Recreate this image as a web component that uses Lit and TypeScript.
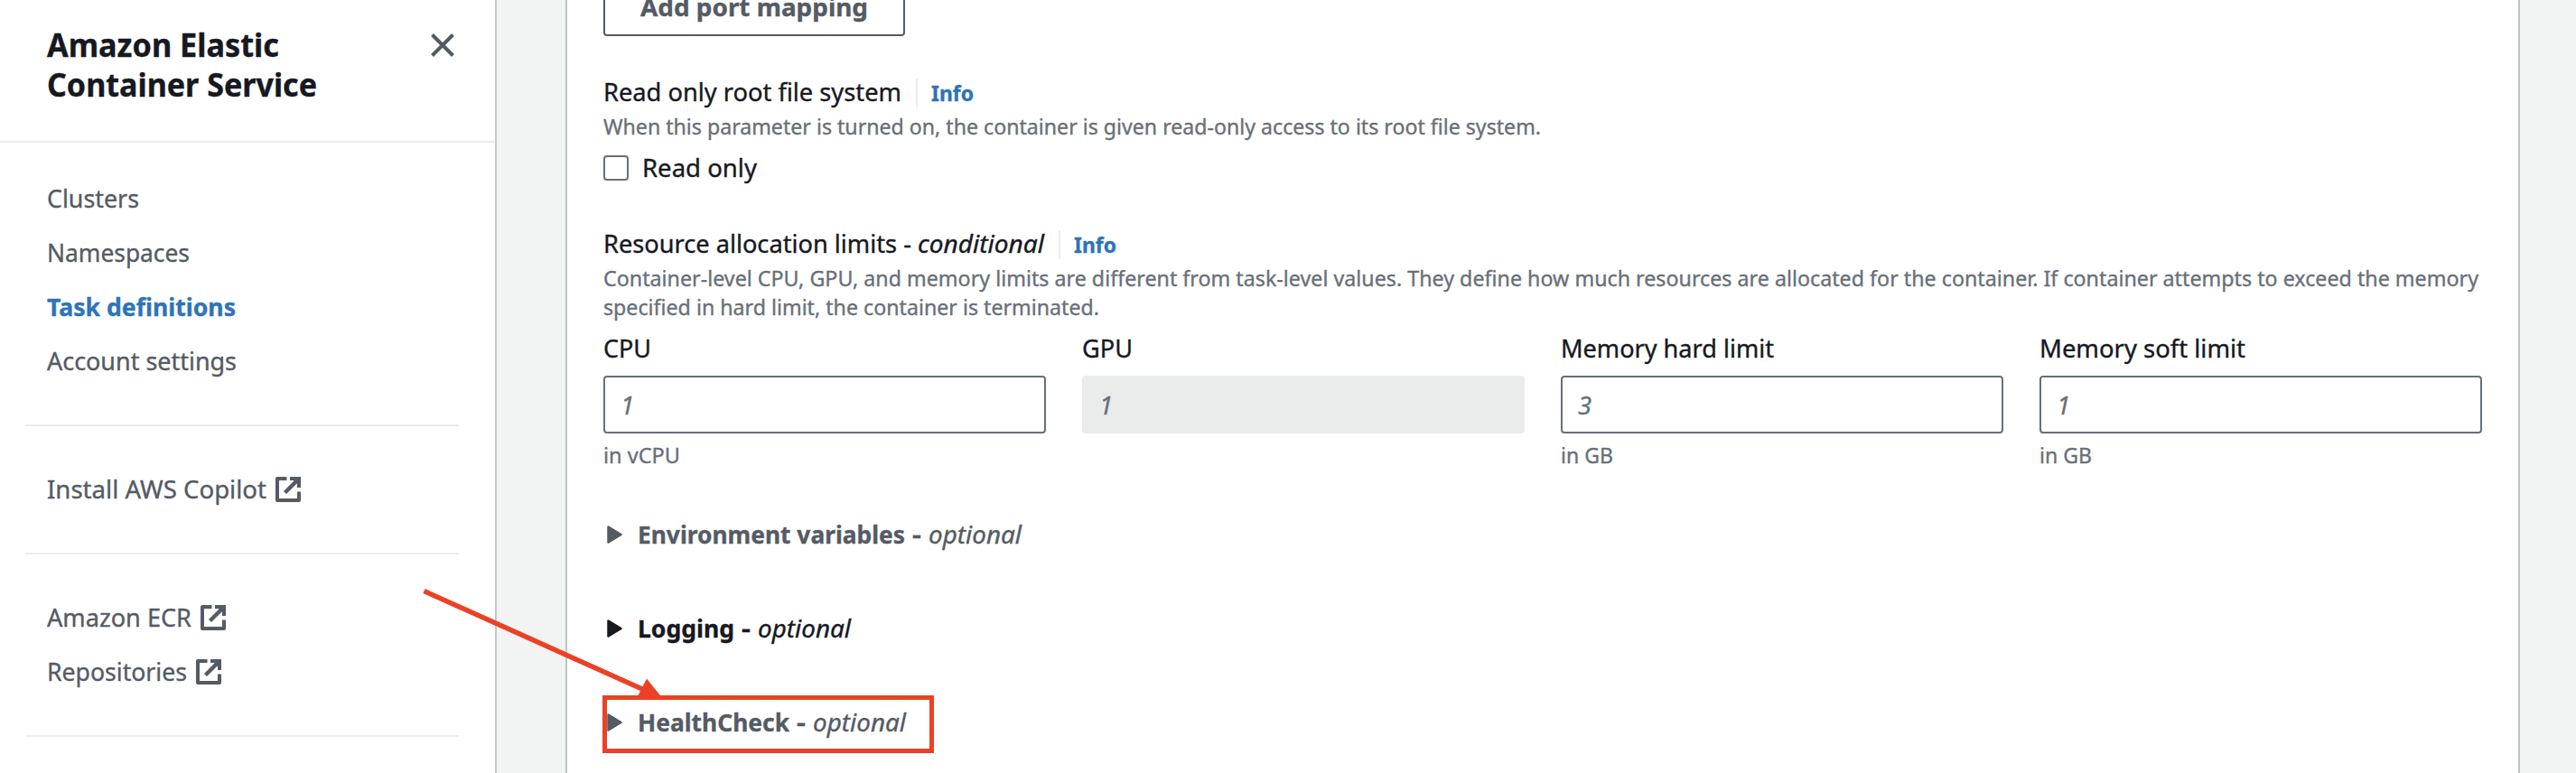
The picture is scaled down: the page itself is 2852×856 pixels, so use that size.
import { LitElement, html, css, svg, nothing } from "lit";
import { customElement, property, state } from "lit/decorators.js";
import { styleMap } from "lit/directives/style-map.js";

/** One line of text condensed or expanded to an exact advance width. */
@customElement("fit-text")
class FitText extends LitElement {
  static styles = css`
    :host { display: inline-block; white-space: pre; }
    .box { display: inline-block; overflow: visible; }
    .ink { display: inline-block; transform-origin: 0 50%; }
  `;
  @property() text = "";
  @property({ type: Number }) width = 0;
  @state() private natural = 0;

  protected updated() {
    const ink = this.renderRoot.querySelector(".ink") as HTMLElement;
    const w = parseFloat(getComputedStyle(ink).width);
    if (w && Math.abs(w - this.natural) > 0.01) this.natural = w;
  }

  render() {
    const scale = this.natural ? this.width / this.natural : 1;
    return html`<span class="box" style=${styleMap({ width: `${this.width}px` })}><span class="ink" style=${styleMap({ transform: `scaleX(${scale})` })}>${this.text}</span></span>`;
  }
}

const fit = (text: string, width: number) => html`<fit-text .text=${text} .width=${width}></fit-text>`;

const externalIcon = svg`
  <path d="M12.5 2H2V26H26V16.5" fill="none" stroke="currentColor" stroke-width="4" stroke-linejoin="round"/>
  <path d="M16 2H26V12" fill="none" stroke="currentColor" stroke-width="4"/>
  <path d="M19 3H25V9Z" fill="currentColor"/>
  <path d="M26 2L10.5 17.5" fill="none" stroke="currentColor" stroke-width="4.4"/>`;

interface NavLink { label: string; width: number; active?: boolean; external?: boolean }
const groups: NavLink[][] = [
  [
    { label: "Clusters", width: 102 },
    { label: "Namespaces", width: 158 },
    { label: "Task definitions", width: 209, active: true },
    { label: "Account settings", width: 210 },
  ],
  [{ label: "Install AWS Copilot", width: 243, external: true }],
  [
    { label: "Amazon ECR", width: 160, external: true },
    { label: "Repositories", width: 155, external: true },
  ],
];

const fields = [
  { label: "CPU", width: 53, value: "1", hint: "in vCPU", hintWidth: 85 },
  { label: "GPU", width: 56, value: "1", disabled: true },
  { label: "Memory hard limit", width: 236, value: "3", hint: "in GB", hintWidth: 58 },
  { label: "Memory soft limit", width: 228, value: "1", hint: "in GB", hintWidth: 58 },
];

const sections = [
  { label: "Environment variables", width: 296, dark: false },
  { label: "Logging", width: 107, dark: true },
  { label: "HealthCheck", width: 168, dark: false },
];

@customElement("app-root")
class AppRoot extends LitElement {
  static styles = css`
    * { box-sizing: border-box; }
    :host {
      display: flex; position: relative; width: 2852px; height: 856px; overflow: hidden;
      background: #f2f3f3; color: #16191f;
      font: 27.5px/32px "Noto Sans", "Open Sans", sans-serif;
      -webkit-text-stroke: 0.35px currentColor;
    }
    .side { width: 550px; flex: none; background: #fff; border-right: 2px solid #c3c8c8; color: #545b64; }
    .head {
      display: flex; justify-content: space-between; height: 158px;
      padding: 27px 45px 0 52px; border-bottom: 2px solid #eaeded;
    }
    h2 { margin: 0; font-size: 35.3px; line-height: 44px; font-weight: 700; color: #16191f; display: flex; flex-direction: column; }
    .close { width: 26px; height: 26px; margin-top: 10px; }
    .group { padding: 39px 40px 41px 24px; margin-left: 28px; border-bottom: 2px solid #eaeded; width: 480px; }
    .group:first-of-type { padding-top: 31px; }
    .link { display: flex; align-items: center; gap: 10px; height: 60px; line-height: 62px; }
    .link fit-text { margin-top: 2px; }
    .link svg { width: 28px; height: 28px; margin-top: 2px; }
    .active { color: #2e73b8; font-weight: 700; }
    .panel {
      width: 2164px; margin-left: 76px; flex: none; background: #fff; padding: 0 40px;
      border: solid #bcc4c7; border-width: 0 2px; display: flex; flex-direction: column;
    }
    .button {
      width: 334px; height: 64px; margin-top: -24px; flex: none; border: 2px solid #545b64; border-radius: 4px;
      color: #545b64; font-weight: 700; line-height: 60px; padding-left: 39px;
    }
    .title { display: flex; height: 39px; margin-top: 45px; line-height: 34px; }
    .title.second { margin-top: 52px; }
    .sep { width: 2px; height: 32px; background: #eaeded; margin: 2px 15px 0 16px; }
    .info { color: #2e73b8; font-size: 23.6px; font-weight: 700; line-height: 36px; }
    .desc { font-size: 23.6px; color: #687078; display: flex; flex-direction: column; }
    .check { display: flex; gap: 15px; height: 32px; margin-top: 13px; line-height: 34px; }
    .box { width: 28px; height: 28px; margin-top: 3px; border: 2px solid #687078; border-radius: 4px; }
    .fields { display: grid; grid-template-columns: repeat(4, 490px); gap: 40px; margin-top: 13px; height: 151px; flex: none; }
    .label { height: 32px; line-height: 34px; }
    .input {
      height: 64px; margin-top: 15px; border: 2px solid #687078; border-radius: 4px; padding-left: 17px;
      line-height: 62px; font-style: italic; color: #687078;
    }
    .disabled { background: #eaeceb; border-color: #eaeceb; }
    .hint { margin-top: 8px; font-size: 23.6px; color: #687078; }
    .sections { display: flex; flex-direction: column; gap: 72px; margin-top: 55px; }
    .expander { display: flex; height: 32px; color: #545b64; font-weight: 700; padding-left: 4px; line-height: 34px; }
    .expander svg { width: 17px; height: 20px; margin: 7px 17px 0 0; }
    .dark { color: #16191f; }
    i { font-weight: 400; }
    .mark { position: absolute; inset: 0; width: 2852px; height: 856px; }
  `;

  render() {
    return html`
      <nav class="side">
        <div class="head">
          <h2>${fit("Amazon Elastic", 257)}${fit("Container Service", 299)}</h2>
          <svg class="close" viewBox="0 0 26 26"><path d="M1.5 1.5L24.5 24.5M24.5 1.5L1.5 24.5" stroke="#545b64" stroke-width="4"/></svg>
        </div>
        ${groups.map((g) => html`<section class="group">
          ${g.map((l) => html`<div class="link ${l.active ? "active" : ""}">
            ${fit(l.label, l.width)}
            ${l.external ? html`<svg viewBox="0 0 28 28">${externalIcon}</svg>` : nothing}
          </div>`)}
        </section>`)}
      </nav>
      <main class="panel">
        <div class="button">${fit("Add port mapping", 252)}</div>
        <div class="title">${fit("Read only root file system", 330)}<span class="sep"></span><span class="info">${fit("Info", 47)}</span></div>
        <div class="desc">${fit("When this parameter is turned on, the container is given read-only access to its root file system.", 1038)}</div>
        <div class="check"><span class="box"></span>${fit("Read only", 127)}</div>
        <div class="title second">${fit("Resource allocation limits - ", 348)}<i>${fit("conditional", 140)}</i><span class="sep"></span><span class="info">${fit("Info", 47)}</span></div>
        <div class="desc">
          ${fit("Container-level CPU, GPU, and memory limits are different from task-level values. They define how much resources are allocated for the container. If container attempts to exceed the memory", 2076)}
          ${fit("specified in hard limit, the container is terminated.", 549)}
        </div>
        <div class="fields">
          ${fields.map((f) => html`<div>
            <div class="label">${fit(f.label, f.width)}</div>
            <div class="input ${f.disabled ? "disabled" : ""}">${f.value}</div>
            ${f.hint ? html`<div class="hint">${fit(f.hint, f.hintWidth!)}</div>` : nothing}
          </div>`)}
        </div>
        <div class="sections">
          ${sections.map((s) => html`<div class="expander ${s.dark ? "dark" : ""}">
            <svg viewBox="0 0 17 20"><path d="M1.5 1.5L15.5 10L1.5 18.5Z" fill="currentColor" stroke="currentColor" stroke-width="2.5" stroke-linejoin="round"/></svg>
            ${fit(s.label, s.width)}${fit(" - ", 26)}<i>${fit("optional", 103)}</i>
          </div>`)}
        </div>
      </main>
      <svg class="mark" viewBox="0 0 2852 856">
        <path d="M469.5 654.5L712 763.5" stroke="#eb4126" stroke-width="5.5"/>
        <path d="M716 751.5L732.5 772H705.5Z" fill="#eb4126"/>
        <rect x="669.5" y="772.5" width="362" height="59" fill="none" stroke="#eb4126" stroke-width="5"/>
      </svg>`;
  }
}
